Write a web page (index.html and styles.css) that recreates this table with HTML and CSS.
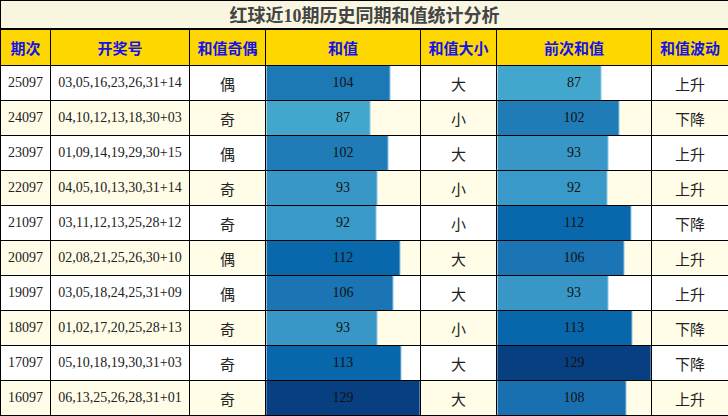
FILE: index.html
```html
<!DOCTYPE html>
<html lang="zh">
<head>
<meta charset="utf-8">
<title>红球近10期历史同期和值统计分析</title>
<link rel="stylesheet" href="styles.css">
</head>
<body>
<table class="stats">
  <colgroup>
    <col class="c-issue"><col class="c-nums"><col class="c-odd"><col class="c-bar"><col class="c-size"><col class="c-bar"><col class="c-trend">
  </colgroup>
  <thead>
    <tr class="title-row"><th colspan="7" class="title">红球近10期历史同期和值统计分析</th></tr>
    <tr class="head-row">
      <th>期次</th><th>开奖号</th><th>和值奇偶</th><th>和值</th><th>和值大小</th><th>前次和值</th><th>和值波动</th>
    </tr>
  </thead>
  <tbody>
    <tr><td class="num">25097</td><td class="num">03,05,16,23,26,31+14</td><td class="cn">偶</td><td class="bar" style="--w:80.6%;--c:#1d79b5">104</td><td class="cn">大</td><td class="bar" style="--w:67.4%;--c:#43a6cc">87</td><td class="cn">上升</td></tr>
    <tr><td class="num">24097</td><td class="num">04,10,12,13,18,30+03</td><td class="cn">奇</td><td class="bar" style="--w:67.4%;--c:#43a6cc">87</td><td class="cn">小</td><td class="bar" style="--w:79.1%;--c:#1f7cb7">102</td><td class="cn">下降</td></tr>
    <tr><td class="num">23097</td><td class="num">01,09,14,19,29,30+15</td><td class="cn">偶</td><td class="bar" style="--w:79.1%;--c:#1f7cb7">102</td><td class="cn">大</td><td class="bar" style="--w:72.1%;--c:#3897c7">93</td><td class="cn">上升</td></tr>
    <tr><td class="num">22097</td><td class="num">04,05,10,13,30,31+14</td><td class="cn">奇</td><td class="bar" style="--w:72.1%;--c:#3897c7">93</td><td class="cn">小</td><td class="bar" style="--w:71.3%;--c:#3999c8">92</td><td class="cn">上升</td></tr>
    <tr><td class="num">21097</td><td class="num">03,11,12,13,25,28+12</td><td class="cn">奇</td><td class="bar" style="--w:71.3%;--c:#3999c8">92</td><td class="cn">小</td><td class="bar" style="--w:86.8%;--c:#0968ac">112</td><td class="cn">下降</td></tr>
    <tr><td class="num">20097</td><td class="num">02,08,21,25,26,30+10</td><td class="cn">偶</td><td class="bar" style="--w:86.8%;--c:#0968ac">112</td><td class="cn">大</td><td class="bar" style="--w:82.2%;--c:#1b74b3">106</td><td class="cn">上升</td></tr>
    <tr><td class="num">19097</td><td class="num">03,05,18,24,25,31+09</td><td class="cn">偶</td><td class="bar" style="--w:82.2%;--c:#1b74b3">106</td><td class="cn">大</td><td class="bar" style="--w:72.1%;--c:#3897c7">93</td><td class="cn">上升</td></tr>
    <tr><td class="num">18097</td><td class="num">01,02,17,20,25,28+13</td><td class="cn">奇</td><td class="bar" style="--w:72.1%;--c:#3897c7">93</td><td class="cn">小</td><td class="bar" style="--w:87.6%;--c:#0866aa">113</td><td class="cn">下降</td></tr>
    <tr><td class="num">17097</td><td class="num">05,10,18,19,30,31+03</td><td class="cn">奇</td><td class="bar" style="--w:87.6%;--c:#0866aa">113</td><td class="cn">大</td><td class="bar" style="--w:100%;--c:#083f80">129</td><td class="cn">下降</td></tr>
    <tr><td class="num">16097</td><td class="num">06,13,25,26,28,31+01</td><td class="cn">奇</td><td class="bar" style="--w:100%;--c:#083f80">129</td><td class="cn">大</td><td class="bar" style="--w:83.7%;--c:#1970b1">108</td><td class="cn">上升</td></tr>
  </tbody>
</table>
</body>
</html>
```

FILE: styles.css
```css
html, body {
  margin: 0;
  padding: 0;
  background: #ffffff;
}

.stats {
  width: 728px;
  border-collapse: collapse;
  table-layout: fixed;
  font-family: "Liberation Serif", "Noto Sans CJK SC", serif;
  font-size: 14px;
  color: #222;
}

.c-issue { width: 50px; }
.c-nums { width: 139px; }
.c-odd { width: 76px; }
.c-bar { width: 155px; }
.c-size { width: 76px; }
.c-trend { width: 77px; }

.stats th,
.stats td {
  border: 1px solid #000;
  padding: 0;
  text-align: center;
  vertical-align: middle;
}

.title-row { height: 28px; }
.title {
  background: #f8f6e1;
  color: #444;
  font-family: "Liberation Serif", "Noto Sans CJK SC", sans-serif;
  font-size: 18px;
  font-weight: bold;
  border-bottom: 2px solid #000 !important;
}

.head-row { height: 37px; }
.head-row th {
  background: #ffd700;
  color: #1414e8;
  font-family: "Noto Sans CJK SC", sans-serif;
  font-size: 15px;
  font-weight: bold;
}

.stats tbody tr { height: 35px; }
.stats tbody tr:nth-child(even) td { background-color: #fffde8; }
.stats tbody tr:nth-child(odd) td { background-color: #ffffff; }

.cn {
  font-family: "Noto Sans CJK SC", sans-serif;
  font-size: 15px;
  color: #222;
}

.stats td.bar {
  background-image: linear-gradient(to right,
    var(--c) 0,
    var(--c) calc(var(--w) - 1px),
    #8ec5e4 calc(var(--w) - 1px),
    #8ec5e4 var(--w),
    transparent var(--w));
  color: #111;
}
```
